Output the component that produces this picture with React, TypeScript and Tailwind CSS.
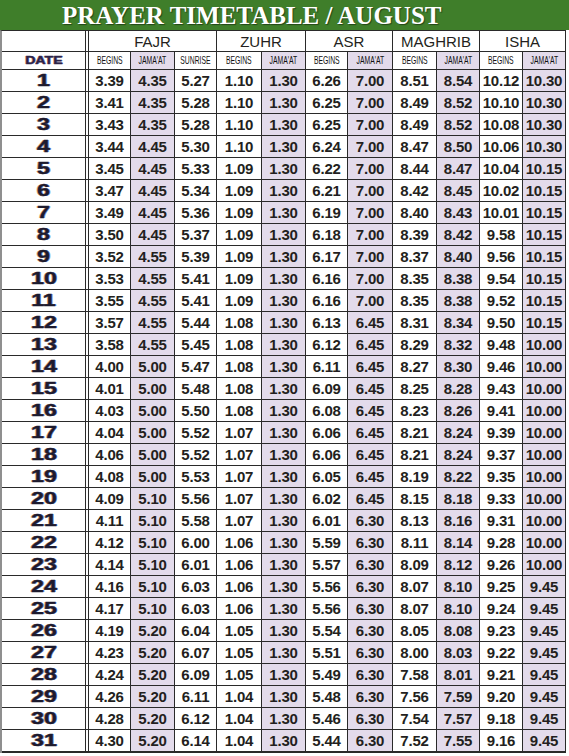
import React from "react";

// ── Prayer timetable, August — flat grid, one row per day ──

const cols =
  "grid grid-cols-[87px_42px_44px_42px_45px_44px_42px_45px_44px_43px_43px_43px]";

const rows: string[][] = [
  ["3.39", "4.35", "5.27", "1.10", "1.30", "6.26", "7.00", "8.51", "8.54", "10.12", "10.30"],
  ["3.41", "4.35", "5.28", "1.10", "1.30", "6.25", "7.00", "8.49", "8.52", "10.10", "10.30"],
  ["3.43", "4.35", "5.28", "1.10", "1.30", "6.25", "7.00", "8.49", "8.52", "10.08", "10.30"],
  ["3.44", "4.45", "5.30", "1.10", "1.30", "6.24", "7.00", "8.47", "8.50", "10.06", "10.30"],
  ["3.45", "4.45", "5.33", "1.09", "1.30", "6.22", "7.00", "8.44", "8.47", "10.04", "10.15"],
  ["3.47", "4.45", "5.34", "1.09", "1.30", "6.21", "7.00", "8.42", "8.45", "10.02", "10.15"],
  ["3.49", "4.45", "5.36", "1.09", "1.30", "6.19", "7.00", "8.40", "8.43", "10.01", "10.15"],
  ["3.50", "4.45", "5.37", "1.09", "1.30", "6.18", "7.00", "8.39", "8.42", "9.58", "10.15"],
  ["3.52", "4.55", "5.39", "1.09", "1.30", "6.17", "7.00", "8.37", "8.40", "9.56", "10.15"],
  ["3.53", "4.55", "5.41", "1.09", "1.30", "6.16", "7.00", "8.35", "8.38", "9.54", "10.15"],
  ["3.55", "4.55", "5.41", "1.09", "1.30", "6.16", "7.00", "8.35", "8.38", "9.52", "10.15"],
  ["3.57", "4.55", "5.44", "1.08", "1.30", "6.13", "6.45", "8.31", "8.34", "9.50", "10.15"],
  ["3.58", "4.55", "5.45", "1.08", "1.30", "6.12", "6.45", "8.29", "8.32", "9.48", "10.00"],
  ["4.00", "5.00", "5.47", "1.08", "1.30", "6.11", "6.45", "8.27", "8.30", "9.46", "10.00"],
  ["4.01", "5.00", "5.48", "1.08", "1.30", "6.09", "6.45", "8.25", "8.28", "9.43", "10.00"],
  ["4.03", "5.00", "5.50", "1.08", "1.30", "6.08", "6.45", "8.23", "8.26", "9.41", "10.00"],
  ["4.04", "5.00", "5.52", "1.07", "1.30", "6.06", "6.45", "8.21", "8.24", "9.39", "10.00"],
  ["4.06", "5.00", "5.52", "1.07", "1.30", "6.06", "6.45", "8.21", "8.24", "9.37", "10.00"],
  ["4.08", "5.00", "5.53", "1.07", "1.30", "6.05", "6.45", "8.19", "8.22", "9.35", "10.00"],
  ["4.09", "5.10", "5.56", "1.07", "1.30", "6.02", "6.45", "8.15", "8.18", "9.33", "10.00"],
  ["4.11", "5.10", "5.58", "1.07", "1.30", "6.01", "6.30", "8.13", "8.16", "9.31", "10.00"],
  ["4.12", "5.10", "6.00", "1.06", "1.30", "5.59", "6.30", "8.11", "8.14", "9.28", "10.00"],
  ["4.14", "5.10", "6.01", "1.06", "1.30", "5.57", "6.30", "8.09", "8.12", "9.26", "10.00"],
  ["4.16", "5.10", "6.03", "1.06", "1.30", "5.56", "6.30", "8.07", "8.10", "9.25", "9.45"],
  ["4.17", "5.10", "6.03", "1.06", "1.30", "5.56", "6.30", "8.07", "8.10", "9.24", "9.45"],
  ["4.19", "5.20", "6.04", "1.05", "1.30", "5.54", "6.30", "8.05", "8.08", "9.23", "9.45"],
  ["4.23", "5.20", "6.07", "1.05", "1.30", "5.51", "6.30", "8.00", "8.03", "9.22", "9.45"],
  ["4.24", "5.20", "6.09", "1.05", "1.30", "5.49", "6.30", "7.58", "8.01", "9.21", "9.45"],
  ["4.26", "5.20", "6.11", "1.04", "1.30", "5.48", "6.30", "7.56", "7.59", "9.20", "9.45"],
  ["4.28", "5.20", "6.12", "1.04", "1.30", "5.46", "6.30", "7.54", "7.57", "9.18", "9.45"],
  ["4.30", "5.20", "6.14", "1.04", "1.30", "5.44", "6.30", "7.52", "7.55", "9.16", "9.45"],
];

// jama'at columns get the lavender fill
const shaded = [false, true, false, false, true, false, true, false, true, false, true];

const subHeads = ["BEGINS", "JAMA'AT", "SUNRISE", "BEGINS", "JAMA'AT", "BEGINS", "JAMA'AT", "BEGINS", "JAMA'AT", "BEGINS", "JAMA'AT"];

const dateCell =
  "flex items-center justify-center border-r-4 border-double border-[#2a2a2a] bg-white";
const cell = "flex items-center justify-center border-r border-[#2a2a2a]";

export default function App() {
  return (
    <div className="w-[569px] h-[756px] bg-white font-['Liberation_Sans',Arial,sans-serif] text-[#231f20]">
      <div className="flex h-[30px] items-center bg-[#3f7e2a] pl-[62px]">
        <h1 className="font-['Liberation_Serif','Times_New_Roman',serif] text-[25px] font-bold leading-none text-white [text-shadow:1px_1px_1px_rgba(0,0,0,0.45)]">
          PRAYER TIMETABLE / AUGUST
        </h1>
      </div>

      <div className="w-[566px] border-t border-l-2 border-t-[#2a2a2a] border-l-[#8f8f8f]">
        <div className={`${cols} h-[21px] border-b border-[#2a2a2a]`}>
          <div className={dateCell} />
          {[
            ["FAJR", "col-span-3"],
            ["ZUHR", "col-span-2"],
            ["ASR", "col-span-2"],
            ["MAGHRIB", "col-span-2"],
            ["ISHA", "col-span-2"],
          ].map(([name, span]) => (
            <div key={name} className={`${cell} ${span} bg-white text-[15px] leading-none`}>
              {name}
            </div>
          ))}
        </div>

        <div className={`${cols} h-[18px] border-b border-[#2a2a2a]`}>
          <div className={dateCell}>
            <span className="inline-block scale-x-[1.35] text-[10.5px] font-bold leading-none text-[#2b2346] [-webkit-text-stroke:0.3px_#2b2346] [text-shadow:-0.6px_0_rgba(190,80,40,0.55),0.6px_0_rgba(40,70,190,0.55)]">
              DATE
            </span>
          </div>
          {subHeads.map((s, i) => (
            <div key={i} className={`${cell} ${shaded[i] ? "bg-[#e3dbeb]" : "bg-white"}`}>
              <span className="inline-block scale-x-[0.62] whitespace-nowrap text-[11px] leading-none text-[#111]">
                {s}
              </span>
            </div>
          ))}
        </div>

        {rows.map((r, d) => (
          <div
            key={d}
            className={`${cols} ${d === rows.length - 1 ? "h-[23px] border-b-2" : "h-[22px] border-b"} border-[#2a2a2a]`}
          >
            <div className={dateCell}>
              <span className="inline-block scale-x-[1.45] text-[16px] font-bold leading-none text-[#1d1b2e] [-webkit-text-stroke:0.4px_#1d1b2e] [text-shadow:-0.8px_0_rgba(200,110,40,0.55),0.8px_0_rgba(40,80,200,0.55)]">
                {d + 1}
              </span>
            </div>
            {r.map((v, i) => (
              <div
                key={i}
                className={`${cell} ${shaded[i] ? "bg-[#e3dbeb]" : "bg-white"} text-[15px] font-bold leading-none tracking-[-0.2px]`}
              >
                {v}
              </div>
            ))}
          </div>
        ))}
      </div>
    </div>
  );
}
